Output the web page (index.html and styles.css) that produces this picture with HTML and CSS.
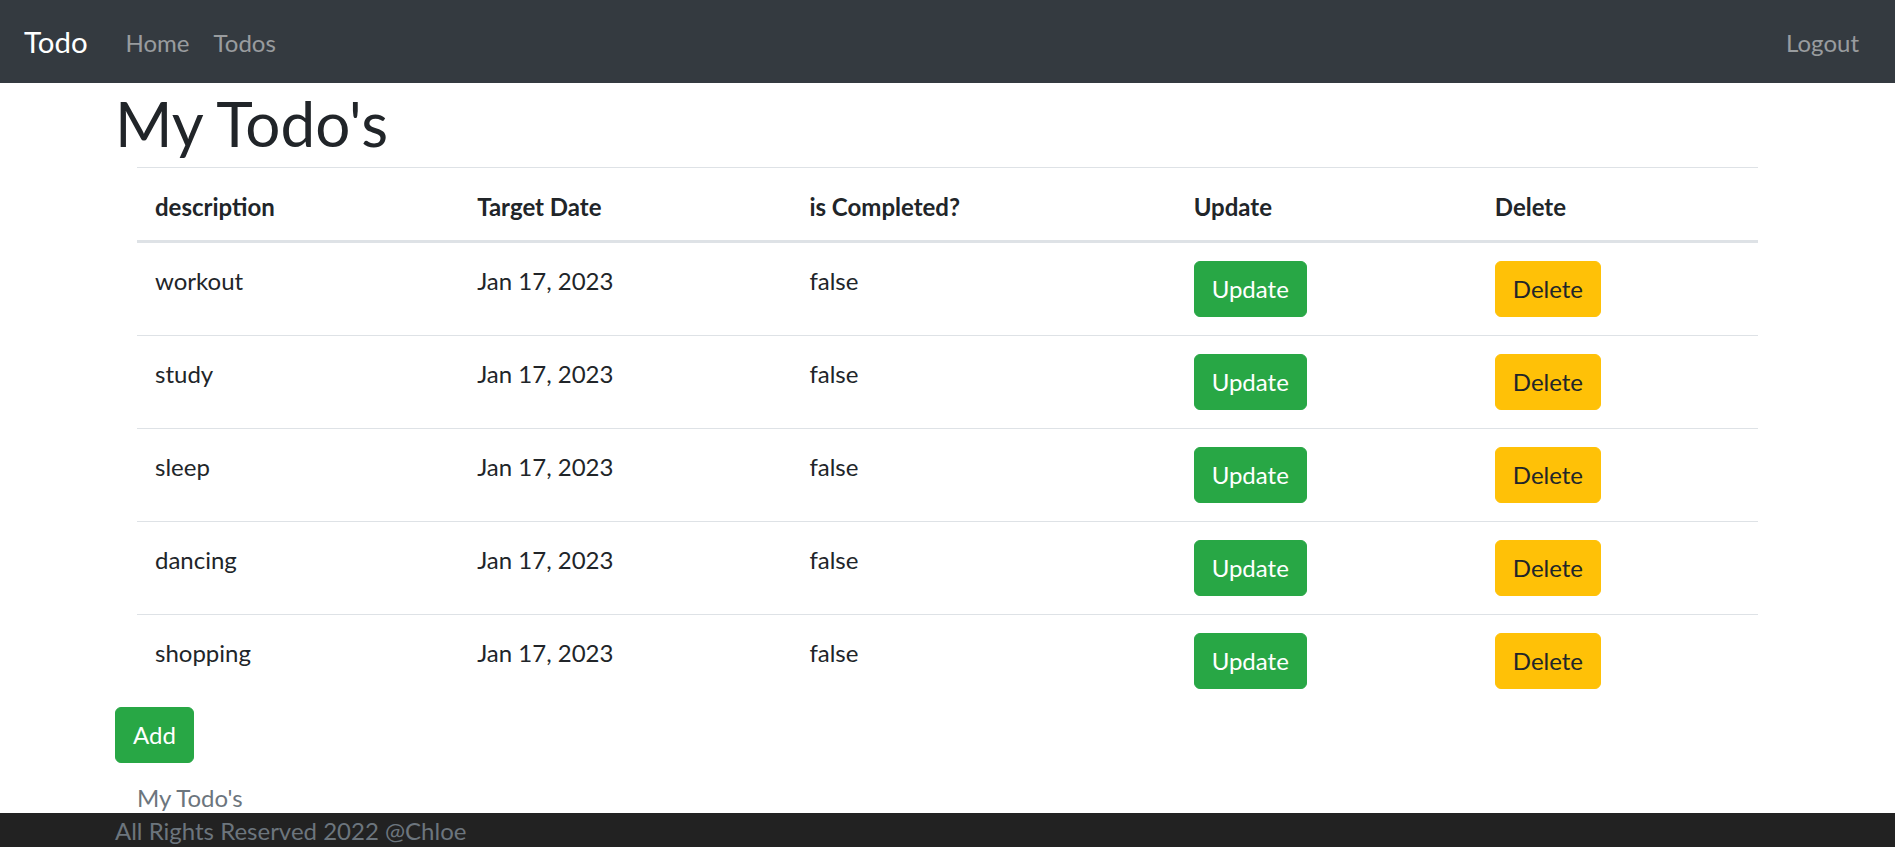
FILE: index.html
```html
<!DOCTYPE html>
<html lang="en">
<head>
  <meta charset="UTF-8" />
  <meta name="viewport" content="width=device-width, initial-scale=1.0" />
  <title>My Todo's</title>
  <link rel="stylesheet" href="styles.css">
</head>
<body>
  <!-- Top Navbar -->
  <nav class="navbar">
    <a href="#" class="brand">Todo</a>
    <ul class="nav-links">
      <li><a href="#">Home</a></li>
      <li><a href="#">Todos</a></li>
    </ul>
    <ul class="nav-links nav-right">
      <li><a href="#">Logout</a></li>
    </ul>
  </nav>

  <div class="container">
    <h1 class="page-title">My Todo's</h1>

    <!-- Todo Table -->
    <div class="table-wrap">
      <table class="todo-table">
        <thead>
          <tr>
            <th class="col-desc">description</th>
            <th class="col-date">Target Date</th>
            <th class="col-done">is Completed?</th>
            <th class="col-update">Update</th>
            <th class="col-delete">Delete</th>
          </tr>
        </thead>
        <tbody>
          <tr>
            <td>workout</td>
            <td>Jan 17, 2023</td>
            <td>false</td>
            <td class="btn-cell"><button class="btn btn-success">Update</button></td>
            <td class="btn-cell"><button class="btn btn-warning">Delete</button></td>
          </tr>
          <tr>
            <td>study</td>
            <td>Jan 17, 2023</td>
            <td>false</td>
            <td class="btn-cell"><button class="btn btn-success">Update</button></td>
            <td class="btn-cell"><button class="btn btn-warning">Delete</button></td>
          </tr>
          <tr>
            <td>sleep</td>
            <td>Jan 17, 2023</td>
            <td>false</td>
            <td class="btn-cell"><button class="btn btn-success">Update</button></td>
            <td class="btn-cell"><button class="btn btn-warning">Delete</button></td>
          </tr>
          <tr>
            <td>dancing</td>
            <td>Jan 17, 2023</td>
            <td>false</td>
            <td class="btn-cell"><button class="btn btn-success">Update</button></td>
            <td class="btn-cell"><button class="btn btn-warning">Delete</button></td>
          </tr>
          <tr>
            <td>shopping</td>
            <td>Jan 17, 2023</td>
            <td>false</td>
            <td class="btn-cell"><button class="btn btn-success">Update</button></td>
            <td class="btn-cell"><button class="btn btn-warning">Delete</button></td>
          </tr>
        </tbody>
      </table>
    </div>

    <button class="btn btn-success">Add</button>
  </div>

  <!-- Footer -->
  <footer>
    <div class="footer-title">My Todo's</div>
    <div class="footer-bar">
      <div class="container">All Rights Reserved 2022 @Chloe</div>
    </div>
  </footer>
</body>
</html>
```

FILE: styles.css
```css
* { box-sizing: border-box; margin: 0; padding: 0; }
body {
  font-family: Lato, "Open Sans", sans-serif;
  font-size: 24px;
  line-height: 35px;
  color: #212529;
  background: #fff;
}
a { text-decoration: none; }

/* —— Navbar —— */
.navbar {
  height: 83px;
  background: #343a40;
  display: flex; align-items: center;
  padding: 0 24px;
}
.brand {
  font-size: 29.4px; line-height: 44px;
  color: #fff;
  margin-right: 26px;
}
.nav-links {
  list-style: none;
  display: flex;
}
.nav-links a {
  display: block;
  padding: 2px 12px 0;
  color: rgba(255,255,255,0.5);
}
.nav-right { margin-left: auto; }

/* —— Page —— */
.container {
  max-width: 1665px;
  margin: 0 auto;
}
.page-title {
  font-size: 62px; font-weight: 400;
  line-height: 74px;
  padding-top: 3px;
  margin-bottom: 7px;
}
.table-wrap { padding: 0 22px; }
.todo-table {
  width: 100%;
  border-collapse: collapse;
  table-layout: fixed;
}
.todo-table th,
.todo-table td {
  text-align: left; vertical-align: top;
  padding: 20px 18px 16px;
  border-top: 1px solid #dee2e6;
}
.todo-table td.btn-cell { padding: 18px; }
.todo-table th {
  font-weight: 700;
  padding-top: 21px; padding-bottom: 16px;
  border-bottom: 3px solid #dee2e6;
}
.col-desc   { width: 322px; }
.col-date   { width: 332px; }
.col-done   { width: 384px; }
.col-update { width: 301px; }
.col-delete { width: 281px; }

.btn {
  font: inherit;
  line-height: 36px;
  padding: 9px 17px;
  border: 1px solid transparent;
  border-radius: 6px;
  cursor: pointer;
}
.btn-success { background: #28a745; border-color: #28a745; color: #fff; }
.btn-warning { background: #ffc107; border-color: #ffc107; color: #212529; }

/* —— Footer —— */
.footer-title {
  max-width: 1621px; margin: 18px auto 0;
  padding-top: 2px;
  line-height: 30px;
  color: #6c757d;
}
.footer-bar {
  height: 34px;
  padding-top: 2px;
  background: #222;
  color: #6c757d;
  line-height: 32px;
}
```
